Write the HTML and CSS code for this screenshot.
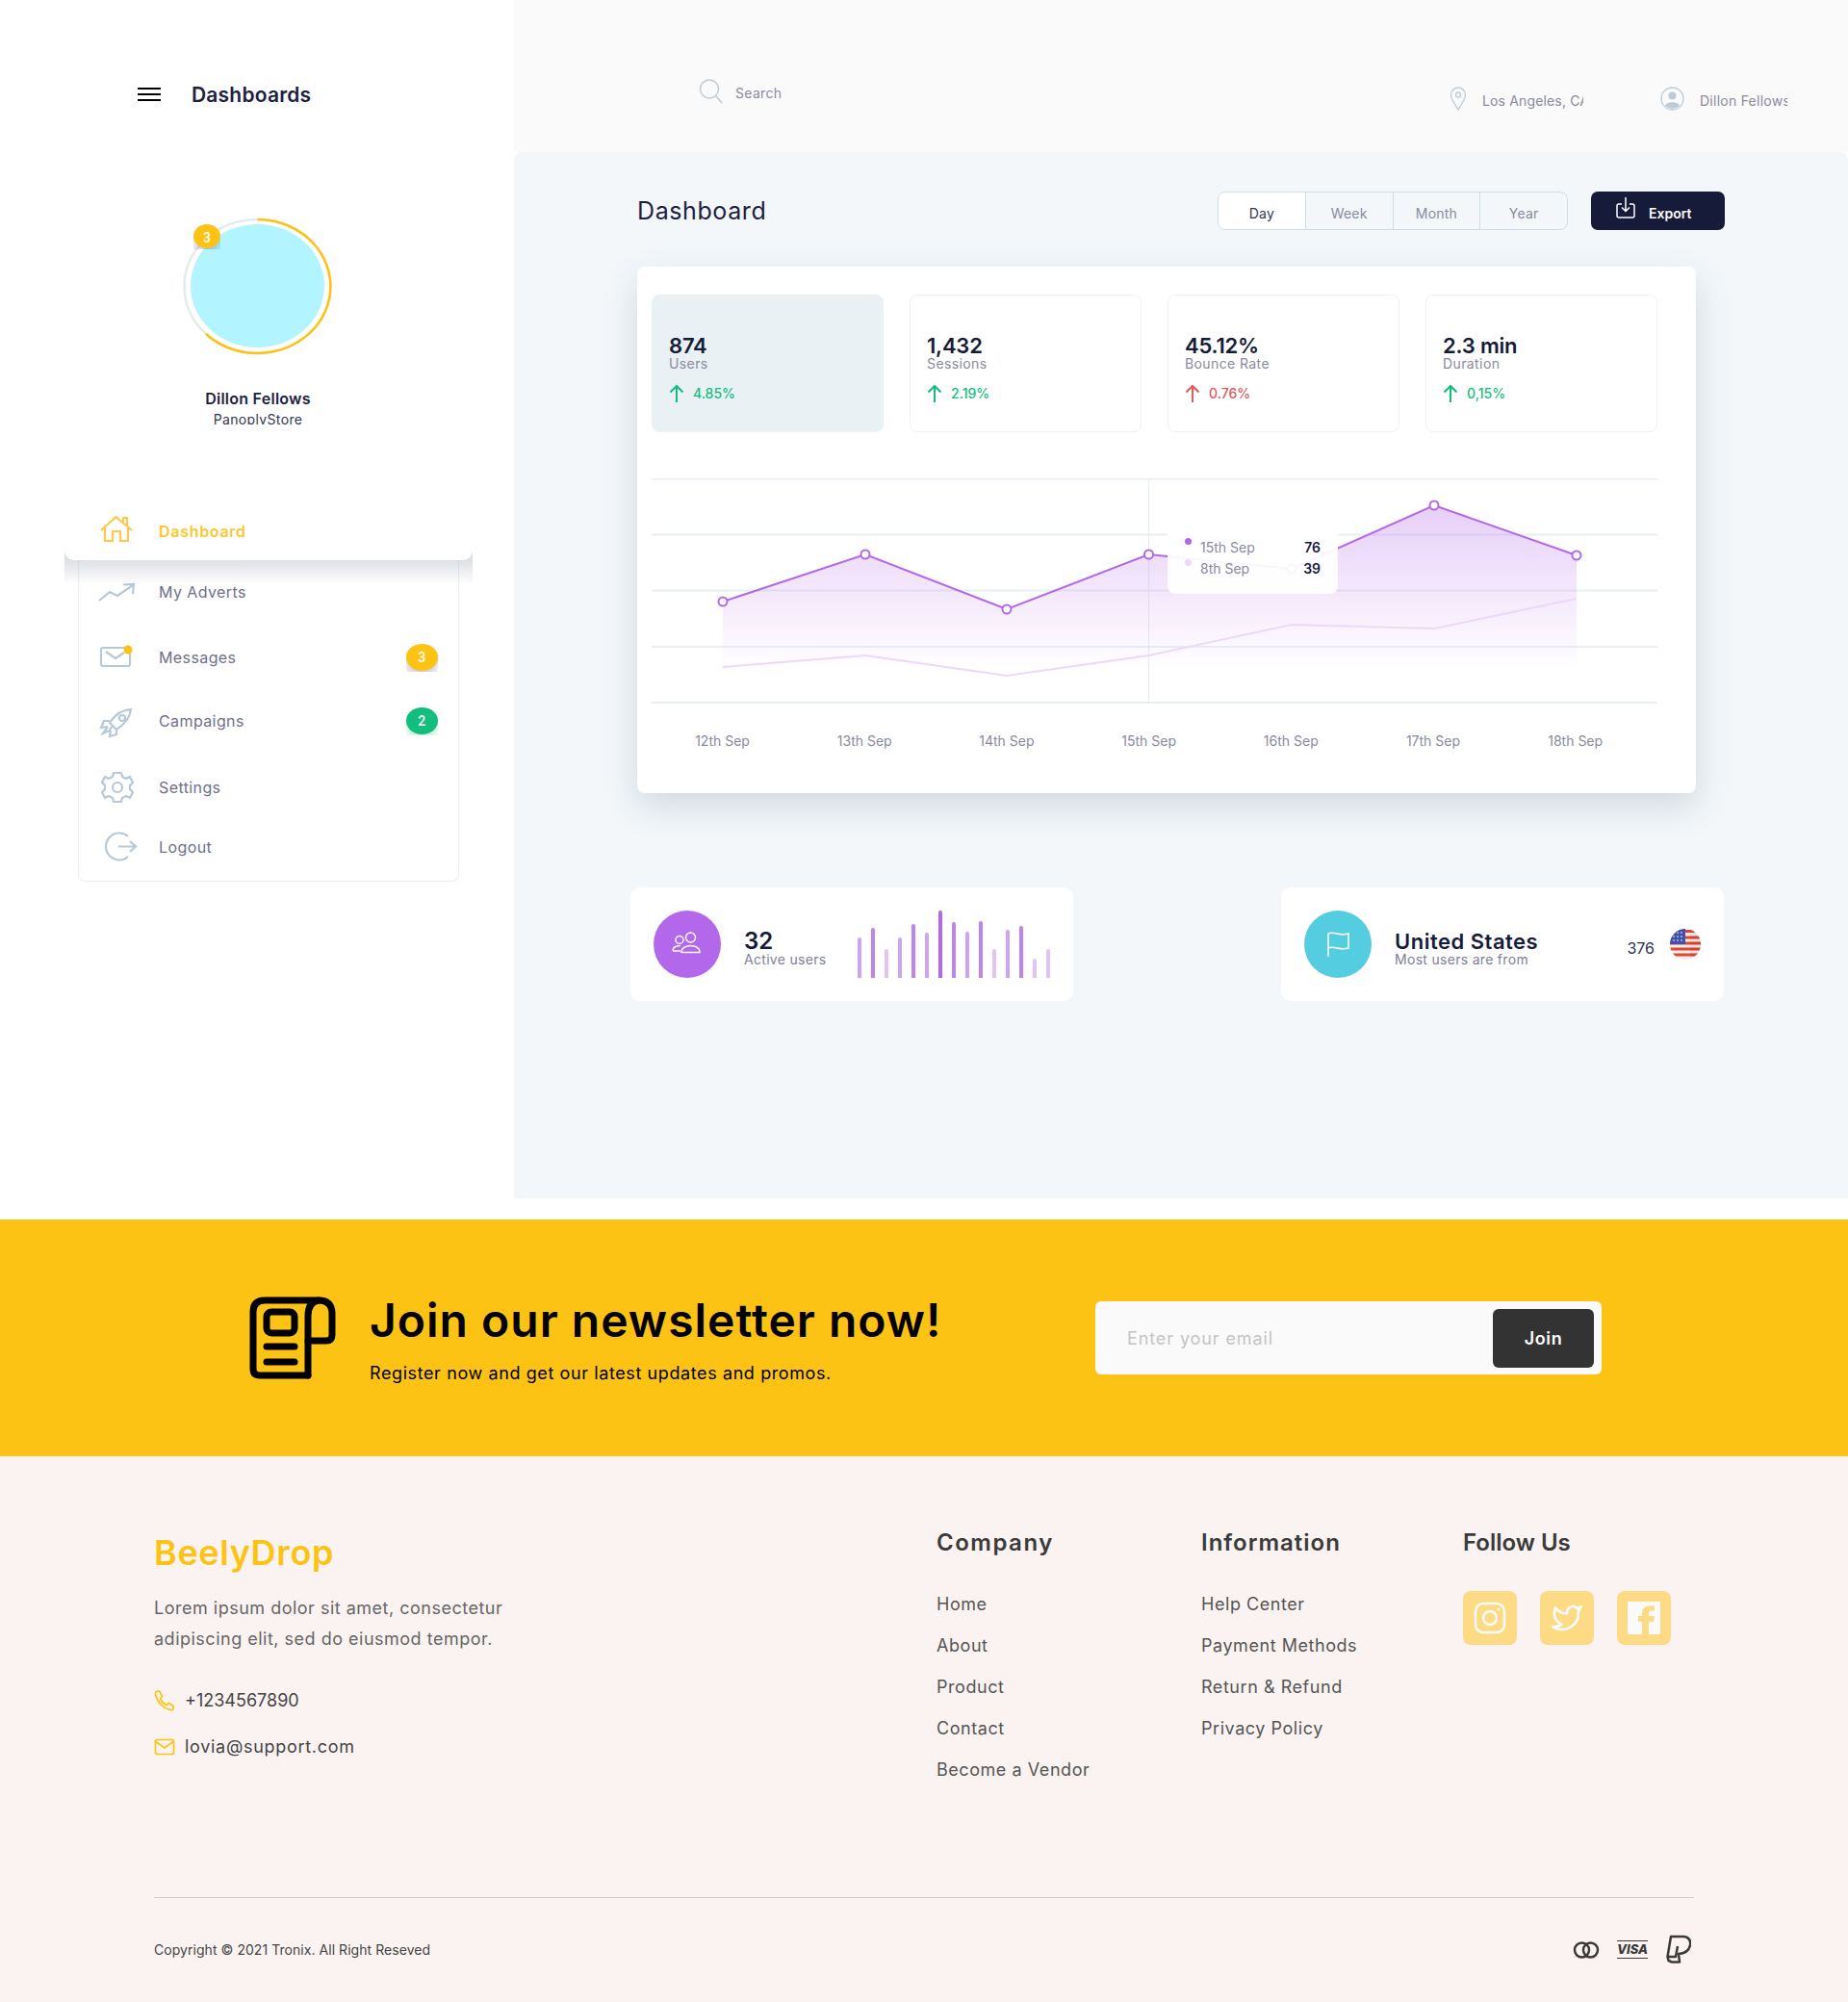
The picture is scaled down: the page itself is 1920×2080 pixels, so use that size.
FILE: index.html
```html
<!DOCTYPE html>
<html>
<head>
    <title>Dashboard</title>
    <link rel="stylesheet" href="styles.css">
</head>
<body>
    <div class="top">
        <aside class="sidebar">
            <div class="brand">
                <div class="burger"><span></span><span></span><span></span></div>
                <div class="brand-title">Dashboards</div>
            </div>
            <div class="avatar">
                <svg width="155" height="143" viewBox="0 0 155 143">
                    <ellipse cx="77.500" cy="71.500" rx="76" ry="69.500" fill="none" stroke="#e3ebee" stroke-width="2.500"/>
                    <path d="M77.500 2 A76 69.500 0 1 1 24 121" fill="none" stroke="#fdc314" stroke-width="2.500"/>
                    <ellipse cx="77.500" cy="71" rx="69.500" ry="64" fill="#b2f4ff"/>
                </svg>
                <div class="badge-clip badge-avatar"><span class="badge badge-yellow">3</span></div>
            </div>
            <div class="profile-name">Dillon Fellows</div>
            <div class="profile-store">PanoplyStore</div>

            <nav class="nav">
                <a class="nav-item active">
                    <svg class="nav-icon" width="40" height="34" viewBox="0 0 40 34"><path d="M3 19 L18.500 5 L35 19 M7 16 V30 H15 V20 H23 V30 H31 V16 M26 10 V6 H30 V14" /></svg>
                    <span class="nav-label">Dashboard</span>
                </a>
                <a class="nav-item">
                    <svg class="nav-icon" width="40" height="34" viewBox="0 0 40 34"><path d="M1 26 L12 17 L20 21 L36 10 M26 9.500 L37 9 L36 19" /></svg>
                    <span class="nav-label">My Adverts</span>
                </a>
                <a class="nav-item">
                    <svg class="nav-icon" width="40" height="34" viewBox="0 0 40 34"><path d="M28 7 H5 Q3 7 3 9 V24 Q3 26 5 26 H31 Q33 26 33 24 V13 M8 11 L18 18 L27 12" /><circle class="dot" cx="31" cy="9" r="4.500"/></svg>
                    <span class="nav-label">Messages</span>
                    <div class="badge-clip nav-badge"><span class="badge badge-yellow">3</span></div>
                </a>
                <a class="nav-item">
                    <svg class="nav-icon" width="40" height="34" viewBox="0 0 40 34"><path d="M34 5 C24 6 18 10 12 19 L19 26 C28 20 33 14 34 5 Z M12 17 L6 17 L3 24 L10 23 M19 25 L19 31 L12 33 L13 27 M10 23 L5 30 L12 27 L14 23" /><circle cx="25" cy="14" r="3"/></svg>
                    <span class="nav-label">Campaigns</span>
                    <div class="badge-clip nav-badge"><span class="badge badge-green">2</span></div>
                </a>
                <a class="nav-item">
                    <svg class="nav-icon" width="40" height="34" viewBox="0 0 40 34"><path d="M16 2 H24 L25 6 L29 8 L33 6 L36 12 L33 15 V19 L36 22 L33 28 L29 26 L25 28 L24 32 H16 L15 28 L11 26 L7 28 L4 22 L7 19 V15 L4 12 L7 6 L11 8 L15 6 Z" stroke-linejoin="round"/><circle cx="20" cy="17" r="5"/></svg>
                    <span class="nav-label">Settings</span>
                </a>
                <a class="nav-item">
                    <svg class="nav-icon" width="40" height="34" viewBox="0 0 40 34"><path d="M31 5.800 A14 14 0 1 0 31 27.200 M21 16.500 H38 M33 11 L39 16.500 L33 22" /></svg>
                    <span class="nav-label">Logout</span>
                </a>
            </nav>
        </aside>

        <div class="right">
            <header class="header">
                <div class="search">
                    <svg width="26" height="26" viewBox="0 0 26 26" fill="none" stroke="#bccbd6" stroke-width="1.500"><ellipse cx="11" cy="10.500" rx="9.500" ry="9.500"/><path d="M17.500 17.500 L24 25"/></svg>
                    <span>Search</span>
                </div>
                <div class="header-right">
                    <div class="head-item">
                        <svg width="18" height="25" viewBox="0 0 18 25" fill="none" stroke="#bccbd6" stroke-width="1.300"><path d="M9 24 C5 17 1.500 13 1.500 8.500 A7.500 7.500 0 0 1 16.500 8.500 C16.500 13 13 17 9 24 Z"/><circle cx="9" cy="8.500" r="2.500"/></svg>
                        <span class="head-text loc">Los Angeles, CA</span>
                    </div>
                    <div class="head-item">
                        <svg width="25" height="25" viewBox="0 0 25 25"><circle cx="12.500" cy="12.500" r="11.500" fill="none" stroke="#bccbd6" stroke-width="1.300"/><circle cx="12.500" cy="9.500" r="4" fill="#bccbd6"/><path d="M5 20 C6 15 19 15 20 20 A11 11 0 0 1 5 20 Z" fill="#bccbd6"/></svg>
                        <span class="head-text who">Dillon Fellows</span>
                    </div>
                </div>
            </header>

            <main class="main">
                <div class="title-row">
                    <h1 class="page-title">Dashboard</h1>
                    <div class="segments">
                        <div class="segment on">Day</div>
                        <div class="segment">Week</div>
                        <div class="segment">Month</div>
                        <div class="segment">Year</div>
                    </div>
                    <button class="export">
                        <svg width="20" height="24" viewBox="0 0 20 24" fill="none" stroke="#fff" stroke-width="1.500"><path d="M6 8 H3 Q1 8 1 10 V20 Q1 22 3 22 H17 Q19 22 19 20 V10 Q19 8 17 8 H14 M10 1 V15 M6 11.500 L10 15.500 L14 11.500"/></svg>
                        <span>Export</span>
                    </button>
                </div>

                <section class="card">
                    <div class="stats">
                        <div class="stat first">
                            <div class="stat-num">874</div>
                            <div class="stat-label">Users</div>
                            <div class="delta up"><svg width="16" height="20" viewBox="0 0 16 20"><path d="M8 19 V2 M1.500 8.500 L8 2 L14.500 8.500"/></svg>4.85%</div>
                        </div>
                        <div class="stat">
                            <div class="stat-num">1,432</div>
                            <div class="stat-label">Sessions</div>
                            <div class="delta up"><svg width="16" height="20" viewBox="0 0 16 20"><path d="M8 19 V2 M1.500 8.500 L8 2 L14.500 8.500"/></svg>2.19%</div>
                        </div>
                        <div class="stat">
                            <div class="stat-num">45.12%</div>
                            <div class="stat-label">Bounce Rate</div>
                            <div class="delta down"><svg width="16" height="20" viewBox="0 0 16 20"><path d="M8 19 V2 M1.500 8.500 L8 2 L14.500 8.500"/></svg>0.76%</div>
                        </div>
                        <div class="stat">
                            <div class="stat-num">2.3 min</div>
                            <div class="stat-label">Duration</div>
                            <div class="delta up"><svg width="16" height="20" viewBox="0 0 16 20"><path d="M8 19 V2 M1.500 8.500 L8 2 L14.500 8.500"/></svg>0,15%</div>
                        </div>
                    </div>

                    <div class="chart">
                        <svg width="1045" height="234" viewBox="0 0 1045 234">
                            <defs>
                                <linearGradient id="area" x1="0" y1="0" x2="0" y2="1">
                                    <stop offset="0" stop-color="#b367ea" stop-opacity=".32"/>
                                    <stop offset="1" stop-color="#b367ea" stop-opacity="0"/>
                                </linearGradient>
                            </defs>
                            <g stroke="#e8eff4" stroke-width="2">
                                <path d="M0 0.500 H1045 M0 58.500 H1045 M0 116.500 H1045 M0 175 H1045 M0 233 H1045"/>
                            </g>
                            <path d="M516.500 1 V233" stroke="#e6ecf1" stroke-width="1"/>
                            <path d="M74 128 L222 79 L369 136 L516.500 79 L665 94 L813 28 L961 80 V198 H74 Z" fill="url(#area)"/>
                            <path d="M74 196 L222 184 L369 205 L516.500 184 L665 152 L813 156 L961 125" fill="none" stroke="#ecd9fa" stroke-width="2"/>
                            <path d="M74 128 L222 79 L369 136 L516.500 79 L665 94 L813 28 L961 80" fill="none" stroke="#b367ea" stroke-width="2"/>
                            <g fill="#fff" stroke="#b367ea" stroke-width="2">
                                <circle cx="74" cy="128" r="4.500"/>
                                <circle cx="222" cy="79" r="4.500"/>
                                <circle cx="369" cy="136" r="4.500"/>
                                <circle cx="516.500" cy="79" r="4.500"/>
                                <circle cx="665" cy="94" r="4.500"/>
                                <circle cx="813" cy="28" r="4.500"/>
                                <circle cx="961" cy="80" r="4.500"/>
                            </g>
                        </svg>
                        <div class="tooltip">
                            <div class="tip-row"><i class="tip-dot"></i><span class="tip-date">15th Sep</span><b>76</b></div>
                            <div class="tip-row"><i class="tip-dot light"></i><span class="tip-date">8th Sep</span><b>39</b></div>
                        </div>
                    </div>
                    <div class="x-labels">
                        <span>12th Sep</span><span>13th Sep</span><span>14th Sep</span><span>15th Sep</span><span>16th Sep</span><span>17th Sep</span><span>18th Sep</span>
                    </div>
                </section>

                <div class="lower">
                    <div class="mini">
                        <div class="round purple">
                            <svg width="32" height="26" viewBox="0 0 32 26" fill="none" stroke="#fff" stroke-width="1.500"><circle cx="8" cy="8.500" r="4"/><circle cx="19.500" cy="6" r="5"/><path d="M1 20 C1 15 5 14.500 9 14.500 M1 20 H9"/><path d="M10 21.500 C10 12 29 12 29 21.500 Z" stroke-linejoin="round"/></svg>
                        </div>
                        <div class="mini-text">
                            <div class="mini-num">32</div>
                            <div class="mini-sub">Active users</div>
                        </div>
                        <div class="bars">
                            <i class="bar b2" style="height:42px"></i>
                            <i class="bar b3" style="height:52px"></i>
                            <i class="bar b1" style="height:30px"></i>
                            <i class="bar b2" style="height:42px"></i>
                            <i class="bar b3" style="height:56px"></i>
                            <i class="bar b2" style="height:47px"></i>
                            <i class="bar b4" style="height:70px"></i>
                            <i class="bar b3" style="height:58px"></i>
                            <i class="bar b2" style="height:48px"></i>
                            <i class="bar b3" style="height:59px"></i>
                            <i class="bar b1" style="height:30px"></i>
                            <i class="bar b2" style="height:50px"></i>
                            <i class="bar b3" style="height:54px"></i>
                            <i class="bar b1" style="height:20px"></i>
                            <i class="bar b1" style="height:30px"></i>
                        </div>
                    </div>
                    <div class="mini">
                        <div class="round teal">
                            <svg width="26" height="28" viewBox="0 0 26 28" fill="none" stroke="#fff" stroke-width="1.500"><path d="M3 27 V3 C9 0 15 6 24 3 V18 C15 21 9 15 3 18"/></svg>
                        </div>
                        <div class="mini-text">
                            <div class="mini-title">United States</div>
                            <div class="mini-sub">Most users are from</div>
                        </div>
                        <div class="country">
                            <span>376</span>
                            <svg width="32" height="32" viewBox="0 0 32 32">
                                <defs><clipPath id="coin"><circle cx="16" cy="16" r="16"/></clipPath></defs>
                                <g clip-path="url(#coin)">
                                    <rect width="32" height="32" fill="#f0f0f0"/>
                                    <path d="M0 2.500 H32 M0 9 H32 M0 15 H32 M0 21 H32 M0 27 H32" stroke="#e8432e" stroke-width="3"/>
                                    <rect width="16" height="16" fill="#3f51a8"/>
                                    <g fill="#fff"><circle cx="4" cy="4" r=".8"/><circle cx="8" cy="4" r=".8"/><circle cx="12" cy="4" r=".8"/><circle cx="4" cy="8" r=".8"/><circle cx="8" cy="8" r=".8"/><circle cx="12" cy="8" r=".8"/><circle cx="4" cy="12" r=".8"/><circle cx="8" cy="12" r=".8"/><circle cx="12" cy="12" r=".8"/></g>
                                    <rect x="21" width="11" height="32" fill="#000" opacity=".06"/>
                                </g>
                            </svg>
                        </div>
                    </div>
                </div>
            </main>
        </div>
    </div>

    <section class="newsletter">
        <svg class="news-icon" width="90" height="86" viewBox="0 0 90 86" fill="none" stroke="#000" stroke-width="7" stroke-linecap="round" stroke-linejoin="round">
            <path d="M61 82 H11 Q4 82 4 75 V16 Q4 4 16 4 H72 Q86 4 86 18 V40 Q86 46 80 46 H61"/>
            <path d="M61 82 V20 Q61 6 72 4"/>
            <rect x="18" y="16" width="29" height="22" rx="5"/>
            <path d="M18 52 H47 M18 68 H47"/>
        </svg>
        <div class="news-text">
            <h2>Join our newsletter now!</h2>
            <p>Register now and get our latest updates and promos.</p>
        </div>
        <form class="news-form">
            <input type="text" placeholder="Enter your email" />
            <button type="button">Join</button>
        </form>
    </section>

    <footer class="footer">
        <div class="foot-top">
            <div class="foot-brand">
                <div class="logo">BeelyDrop</div>
                <p>Lorem ipsum dolor sit amet, consectetur<br/>adipiscing elit, sed do eiusmod tempor.</p>
                <div class="contact">
                    <svg width="22" height="22" viewBox="0 0 22 22" fill="none" stroke="#fdc314" stroke-width="1.700" stroke-linejoin="round"><path d="M2 1.500 L5.500 1 L8.500 6.500 L6.500 9 C8 12 10 14 13 15.500 L15.500 13.500 L20.500 17 L20 19.500 Q19 21 17 20.500 C9 18.500 3 12 1.500 4 Q1.300 2.500 2 1.500 Z"/></svg>
                    <span>+1234567890</span>
                </div>
                <div class="contact">
                    <svg width="22" height="22" viewBox="0 0 22 22" fill="none" stroke="#fdc314" stroke-width="1.700" stroke-linejoin="round"><rect x="1.500" y="3.500" width="19" height="15" rx="2"/><path d="M2 5.500 L11 12 L20 5.500"/></svg>
                    <span class="mail">lovia@support.com</span>
                </div>
            </div>
            <div class="foot-col company">
                <h3>Company</h3>
                <a>Home</a><a>About</a><a>Product</a><a>Contact</a><a>Become a Vendor</a>
            </div>
            <div class="foot-col info">
                <h3>Information</h3>
                <a>Help Center</a><a>Payment Methods</a><a>Return &amp; Refund</a><a>Privacy Policy</a>
            </div>
            <div class="foot-col">
                <h3>Follow Us</h3>
                <div class="socials">
                    <div class="social">
                        <svg width="34" height="34" viewBox="0 0 34 34" fill="none" stroke="#fafafa" stroke-width="2.500"><rect x="2" y="2" width="30" height="30" rx="8"/><circle cx="17" cy="17" r="7"/><circle cx="26" cy="8" r="1.500" fill="#fafafa" stroke="none"/></svg>
                    </div>
                    <div class="social">
                        <svg width="32" height="32" viewBox="0 0 24 24" fill="none" stroke="#fafafa" stroke-width="2" stroke-linejoin="round"><path d="M23 3a10.900 10.900 0 0 1-3 1.530 4.480 4.480 0 0 0-7.860 3v1A10.660 10.660 0 0 1 3 4s-4 9 5 13a11.640 11.640 0 0 1-7 2c9 5 20 0 20-11.500a4.500 4.500 0 0 0-.08-.83A7.720 7.720 0 0 0 23 3z"/></svg>
                    </div>
                    <div class="social">
                        <svg width="34" height="34" viewBox="0 0 34 34"><rect width="34" height="34" rx="1" fill="#fafafa"/><path d="M22 34 V21 H27 L28 15 H22 V12 Q22 9.500 25 9.500 H28 V4.500 H23 Q15 4.500 15 12 V15 H11 V21 H15 V34 Z" fill="#fddb85"/></svg>
                    </div>
                </div>
            </div>
        </div>
        <div class="foot-bottom">
            <span class="copy">Copyright © 2021 Tronix. All Right Reseved</span>
            <div class="pay">
                <svg width="28" height="18" viewBox="0 0 28 18" fill="none" stroke="#3a3a3a" stroke-width="2.500"><circle cx="9.500" cy="9" r="7.500"/><circle cx="18.500" cy="9" r="7.500"/></svg>
                <div class="visa">VISA</div>
                <svg width="27" height="31" viewBox="-1 0 27 31" fill="none" stroke="#3a3a3a" stroke-width="2.500" stroke-linejoin="round"><path d="M5 2 H18 C23 2 26 6 25 11 C24 16 20 19.500 13 20 L14 28.500 H6 L2.500 27 L1.500 23 Z"/><path d="M1.500 23 H10 L12 12"/></svg>
            </div>
        </div>
    </footer>
</body>
</html>
```

FILE: styles.css
```css
* {
    box-sizing: border-box;
}
body {
    margin: 0;
    background-color: #fff;
    font-family: Inter, "Open Sans", sans-serif;
    color: #161b39;
}
h1, h2, h3, p {
    margin: 0;
}

.top {
    display: flex;
    height: 1267px;
}

/* sidebar */
.sidebar {
    width: 534px;
    flex: none;
    padding-top: 78px;
}
.brand {
    display: flex;
    align-items: center;
    height: 40px;
    padding-left: 143px;
}
.burger {
    width: 24px;
    margin-right: 32px;
}
.burger span {
    display: block;
    height: 2px;
    background-color: #000;
    margin: 4px 0;
}
.brand-title {
    font-size: 21px;
    font-weight: 600;
    letter-spacing: .2px;
    color: #1c2140;
}
.avatar {
    position: relative;
    width: 155px;
    height: 143px;
    margin: 108px 0 0 190px;
}
.avatar svg {
    display: block;
}
.badge-clip {
    overflow: hidden;
    display: flex;
    justify-content: center;
}
.badge {
    display: block;
    width: 100%;
    border-radius: 50%;
    color: #fff;
    font-family: Roboto, sans-serif;
    font-weight: 500;
    font-size: 14px;
    text-align: center;
}
.badge-yellow {
    background-color: #fdc314;
    box-shadow: 0 6px 8px rgba(60, 50, 130, .25);
}
.badge-green {
    background-color: #12bd7d;
    box-shadow: 0 6px 8px rgba(18, 189, 125, .25);
}
.badge-avatar {
    position: absolute;
    left: 11px;
    top: 7px;
    width: 28px;
    height: 26px;
}
.badge-avatar .badge {
    height: 25px;
    line-height: 29px;
}
.profile-name {
    margin-top: 34px;
    width: 536px;
    text-align: center;
    font-size: 16px;
    font-weight: 600;
    line-height: 22px;
    letter-spacing: .25px;
    color: #1c2140;
}
.profile-store {
    width: 536px;
    text-align: center;
    font-size: 14px;
    height: 14px;
    line-height: 18px;
    letter-spacing: .35px;
    overflow: hidden;
    margin-top: 2px;
    color: #34384f;
}

.nav {
    position: relative;
    display: grid;
    grid-template-rows: 66px 66px 70px 62px 76px 48px;
    width: 396px;
    height: 400px;
    margin: 75px 0 0 81px;
    border: 1px solid #e8eff4;
    border-top: none;
    border-radius: 8px;
}
.nav-item {
    position: relative;
    display: flex;
    align-items: center;
    padding: 0 21px 0 20px;
    font-size: 16px;
    letter-spacing: .4px;
    color: #70708a;
}
.nav-icon {
    flex: none;
    margin-right: 23px;
    overflow: visible;
    fill: none;
    stroke: #b7c9d6;
    stroke-width: 2.200;
}
.nav-icon .dot {
    fill: #fdc314;
    stroke: none;
}
.nav-item.active {
    margin: 0 -15px;
    padding-left: 35px;
    color: #fcc72f;
    font-weight: 600;
    letter-spacing: .7px;
    z-index: 1;
}
.nav-item.active::before {
    content: "";
    position: absolute;
    top: 0;
    right: 0;
    bottom: 0;
    left: 0;
    background-color: #fff;
    border-radius: 10px;
    z-index: -1;
}
.nav-item.active::after {
    content: "";
    position: absolute;
    left: 0;
    right: 0;
    top: 56px;
    height: 36px;
    background: linear-gradient(rgba(40, 50, 80, .15) 10px, rgba(40, 50, 80, 0));
    z-index: -2;
}
.nav-item.active .nav-icon {
    stroke: #fdc850;
}
.nav-item.active .nav-label {
    margin-top: 6px;
}
.nav-badge {
    margin-left: auto;
    width: 33px;
    height: 29px;
}
.nav-badge .badge {
    height: 28px;
    line-height: 28px;
}

/* right side */
.right {
    flex: 1;
    min-width: 0;
}
.header {
    display: flex;
    height: 158px;
    padding: 82px 63px 0 192px;
    background-color: #fafafa;
}
.search {
    display: flex;
    font-size: 14px;
    letter-spacing: .3px;
    color: #8a8a9e;
}
.search span {
    margin: 6px 0 0 12px;
}
.header-right {
    display: flex;
    margin-left: auto;
    padding-top: 8px;
    font-size: 14px;
    color: #8a8a9e;
}
.head-item {
    display: flex;
    align-items: center;
    height: 25px;
}
.head-text {
    margin: 4px 0 0 16px;
    overflow: hidden;
    white-space: nowrap;
}
.loc {
    width: 105px;
    margin-right: 80px;
    letter-spacing: .15px;
}
.who {
    width: 91px;
    letter-spacing: .25px;
}

.main {
    height: 1087px;
    padding: 41px 128px 0 128px;
    background-color: #f3f7fa;
    border-radius: 8px 8px 0 0;
}
.title-row {
    display: flex;
    align-items: center;
    height: 40px;
}
.page-title {
    font-size: 25px;
    font-weight: 400;
    letter-spacing: .6px;
    color: #1c2140;
}
.segments {
    display: flex;
    width: 364px;
    margin-left: auto;
    border: 1px solid #cfdde5;
    border-radius: 8px;
    overflow: hidden;
}
.segment {
    flex: 1;
    height: 38px;
    line-height: 44px;
    text-align: center;
    font-size: 14px;
    letter-spacing: .2px;
    color: #8a8a9e;
    border-left: 1px solid #cfdde5;
}
.segment.on {
    background-color: #fff;
    border-left: none;
    color: #34384f;
}
.export {
    display: flex;
    align-items: center;
    width: 139px;
    height: 40px;
    margin-left: 24px;
    padding: 0 0 0 26px;
    border: none;
    border-radius: 7px;
    background-color: #161b39;
    color: #fff;
    font-family: inherit;
    font-size: 14px;
    font-weight: 600;
}
.export svg {
    margin: -6px 14px 0 0;
}
.export span {
    margin-top: 4px;
}

.card {
    width: 1100px;
    height: 547px;
    margin-top: 38px;
    padding: 29px 0 0 15px;
    background-color: #fff;
    border-radius: 8px;
    box-shadow: 0 14px 36px rgba(40, 60, 90, .16);
}
.stats {
    display: grid;
    grid-template-columns: repeat(4, 241px);
    gap: 27px;
}
.stat {
    height: 143px;
    padding: 38px 0 0 17px;
    border: 1px solid #eaf2f6;
    border-radius: 8px;
}
.stat.first {
    background-color: #e9f1f5;
}
.stat-num {
    font-size: 22px;
    font-weight: 600;
    line-height: 22px;
    padding-top: 3px;
    letter-spacing: -.2px;
}
.stat-label {
    font-size: 14px;
    line-height: 16px;
    letter-spacing: .4px;
    color: #8a8a9e;
}
.delta {
    display: flex;
    align-items: center;
    gap: 9px;
    margin-top: 13px;
    font-size: 14px;
    font-weight: 500;
    line-height: 20px;
}
.delta svg {
    fill: none;
    stroke: currentColor;
    stroke-width: 2;
}
.up {
    color: #12bd7d;
}
.down {
    color: #e25a5a;
}

.chart {
    position: relative;
    height: 234px;
    margin-top: 48px;
}
.chart svg {
    display: block;
}
.tooltip {
    position: absolute;
    left: 536px;
    top: 38px;
    width: 177px;
    height: 82px;
    padding: 22px 18px 0 18px;
    background-color: rgba(255, 255, 255, .93);
    border-radius: 8px;
    font-size: 14px;
}
.tip-row {
    display: flex;
    align-items: center;
    height: 22px;
}
.tip-dot {
    width: 7px;
    height: 7px;
    margin: -12px 9px 0 0;
    border-radius: 50%;
    background-color: #b367ea;
}
.tip-dot.light {
    background-color: #ecd9fa;
}
.tip-date {
    color: #8a8a9e;
}
.tip-row b {
    margin-left: auto;
    font-size: 14px;
    font-weight: 600;
}
.x-labels {
    display: grid;
    grid-template-columns: repeat(7, 147.700px);
    margin: 29px 0 0 -.300px;
    font-size: 14px;
    line-height: 20px;
    text-align: center;
    color: #8a8a9e;
}

.lower {
    display: flex;
    justify-content: space-between;
    width: 1136px;
    margin: 98px 0 0 -7px;
}
.mini {
    display: flex;
    align-items: center;
    width: 460px;
    height: 118px;
    padding-left: 24px;
    background-color: #fff;
    border-radius: 10px;
}
.round {
    display: flex;
    align-items: center;
    justify-content: center;
    width: 70px;
    height: 70px;
    flex: none;
    border-radius: 50%;
}
.purple {
    background-color: #b367ea;
}
.teal {
    background-color: #54cde0;
}
.mini-text {
    margin-left: 24px;
    padding-top: 8.500px;
}
.mini-num {
    font-size: 24px;
    font-weight: 600;
    line-height: 22px;
}
.mini-title {
    font-size: 22px;
    font-weight: 600;
    line-height: 22px;
    letter-spacing: .5px;
}
.mini-sub {
    margin-top: .500px;
    font-size: 14px;
    line-height: 14px;
    letter-spacing: .3px;
    color: #80809a;
}
.bars {
    display: flex;
    align-items: flex-end;
    gap: 10px;
    height: 70px;
    margin: 0 24px 0 auto;
}
.bar {
    width: 4px;
    border-radius: 2px 2px 0 0;
}
.b1 {
    background-color: #e0c3f7;
}
.b2 {
    background-color: #cfa3f1;
}
.b3 {
    background-color: #c085ed;
}
.b4 {
    background-color: #b367ea;
}
.country {
    display: flex;
    align-items: center;
    gap: 16px;
    margin-left: auto;
    padding-right: 24px;
    font-size: 16px;
    color: #2c3050;
}
.country span {
    margin-top: 8px;
}

/* newsletter */
.newsletter {
    display: flex;
    align-items: center;
    height: 246px;
    padding-left: 259px;
    background-color: #fdc314;
}
.news-icon {
    flex: none;
}
.news-text {
    width: 789px;
    padding: 4px 0 0 35px;
    color: #000;
}
.news-text h2 {
    font-size: 48px;
    font-weight: 600;
    line-height: 58px;
    letter-spacing: 1px;
}
.news-text p {
    margin-top: 12px;
    font-size: 18px;
    line-height: 28px;
    letter-spacing: .6px;
}
.news-form {
    display: flex;
    align-items: center;
    width: 526px;
    height: 76px;
    padding: 0 8px 0 31px;
    background-color: #fafafa;
    border-radius: 6px;
}
.news-form input {
    flex: 1;
    min-width: 0;
    border: none;
    outline: none;
    background: none;
    font-family: inherit;
    font-size: 18px;
    letter-spacing: .9px;
}
.news-form input::placeholder {
    color: #c4c4c4;
}
.news-form button {
    width: 105px;
    height: 61px;
    border: none;
    border-radius: 6px;
    background-color: #333;
    color: #fff;
    font-family: inherit;
    font-size: 18px;
    font-weight: 600;
    letter-spacing: .6px;
}

/* footer */
.footer {
    height: 567px;
    padding: 0 160px;
    background-color: #fbf3f1;
}
.foot-top {
    display: grid;
    grid-template-columns: 813px 275px 272px 1fr;
    height: 459px;
    padding-top: 72px;
    border-bottom: 1px solid #cfcaca;
}
.logo {
    margin-top: 7px;
    font-size: 36px;
    font-weight: 600;
    line-height: 42px;
    letter-spacing: .66px;
    color: #fdc314;
}
.foot-brand p {
    margin-top: 21px;
    font-size: 18px;
    line-height: 32px;
    letter-spacing: .5px;
    color: #666;
}
.contact {
    display: flex;
    align-items: center;
    gap: 10px;
    margin-top: 20px;
    font-size: 18px;
    line-height: 28px;
    color: #444;
}
.foot-brand p + .contact {
    margin-top: 34px;
}
.mail {
    letter-spacing: .7px;
}
.foot-col h3 {
    font-size: 24px;
    font-weight: 600;
    line-height: 36px;
    color: #3a3a3a;
    margin-bottom: 32px;
}
.company h3 {
    letter-spacing: 1.500px;
}
.info h3 {
    letter-spacing: 1px;
}
.foot-col a {
    display: block;
    margin-bottom: 16px;
    font-size: 18px;
    line-height: 27px;
    letter-spacing: .55px;
    color: #555;
}
.socials {
    display: flex;
    gap: 24px;
}
.social {
    display: flex;
    align-items: center;
    justify-content: center;
    width: 56px;
    height: 56px;
    background-color: #fddb85;
    border-radius: 8px;
}
.foot-bottom {
    display: flex;
    align-items: center;
    justify-content: space-between;
    height: 107px;
}
.copy {
    font-size: 14px;
    letter-spacing: .05px;
    color: #444;
}
.pay {
    display: flex;
    align-items: center;
    gap: 18px;
    padding-right: 3px;
}
.visa {
    width: 32px;
    height: 19px;
    border-top: 1px solid #3a3a3a;
    border-bottom: 1px solid #3a3a3a;
    font-size: 13px;
    font-weight: 800;
    font-style: italic;
    line-height: 17px;
    text-align: center;
    color: #3a3a3a;
}
```
